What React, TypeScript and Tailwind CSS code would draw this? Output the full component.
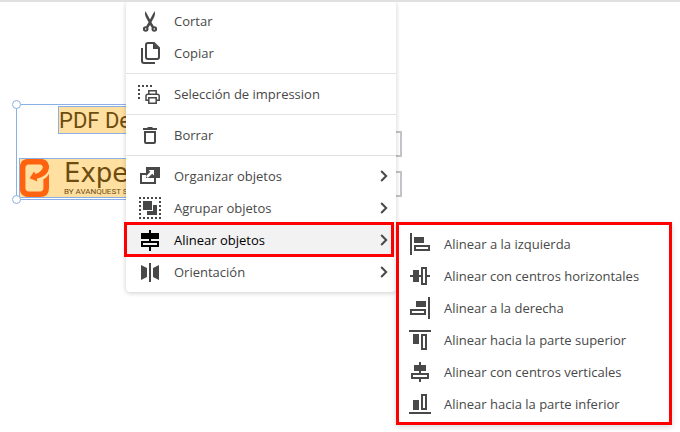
import { ReactNode } from 'react';
import clsx from 'clsx';

interface MenuEntry {
  label: string;
  icon: ReactNode;
  submenu?: MenuEntry[];
}

function Icon({ children, crisp = true }: { children: ReactNode; crisp?: boolean }) {
  return (
    <svg
      viewBox="0 0 24 24"
      className="size-6 shrink-0"
      fill="currentColor"
      shapeRendering={crisp ? 'crispEdges' : 'auto'}
      aria-hidden="true"
    >
      {children}
    </svg>
  );
}

const outline = { fill: 'none', stroke: 'currentColor', strokeWidth: 2 };

const CutIcon = () => (
  <Icon crisp={false}>
    <path d="M7.4 2 Q6.2 5 7.8 8 L10.6 13.2 L8 17.6 L10 19 L12 16 L14 19 L16 17.6 L13.4 13.2 L16.2 8 Q17.8 5 16.6 2 L12 10.4 Z" />
    <circle cx="7.7" cy="20" r="1.8" {...outline} />
    <circle cx="16.3" cy="20" r="1.8" {...outline} />
  </Icon>
);

const CopyIcon = () => (
  <Icon crisp={false}>
    <path d="M10 2 H16 L21 7 V16 Q21 18 19 18 H10 Q8 18 8 16 V4 Q8 2 10 2 Z" {...outline} />
    <path d="M15 2 V8 H21 Z" />
    <path d="M4 7 V20 Q4 22 6 22 H17" {...outline} />
  </Icon>
);

const PrintSelectionIcon = () => (
  <Icon crisp={false}>
    <path d="M0 4 H14" {...outline} strokeDasharray="2 2" />
    <path d="M1 7 V17" {...outline} strokeDasharray="2 2" />
    <g {...outline} strokeWidth={1.5}>
      <path d="M10.8 12 V8.8 H18.2 V12" />
      <path d="M11 18.2 H8 V14 Q8 12.2 10 12.2 H19.2 Q21.2 12.2 21.2 14 V18.2 H18" />
      <path d="M10.8 15.8 H18.2 V21.2 H10.8 Z" />
    </g>
  </Icon>
);

const DeleteIcon = () => (
  <Icon crisp={false}>
    <path d="M5 5 H9 L10 4 H14 L15 5 H19 V7 H5 Z" />
    <path d="M7 9 H17 V19 Q17 20 16 20 H8 Q7 20 7 19 Z" {...outline} />
  </Icon>
);

const ArrangeIcon = () => (
  <Icon crisp={false}>
    <path d="M8 3 H22 V14 H8 Z" />
    <path d="M2 9 H8 V11 H4 V18 H16 V14 H18 V20 H2 Z" />
    <path d="M4 11 H8 V14 H16 V18 H4 Z" fill="white" />
    <path d="M10.5 6 H16 V11.5 L14.2 9.7 L9.8 14 L8 12.2 L12.3 7.8 Z" fill="white" />
  </Icon>
);

const GroupIcon = () => (
  <Icon>
    <path d="M1 2 H23 M1 22 H23" {...outline} strokeDasharray="2 2" />
    <path d="M2 5 V20 M22 5 V20" {...outline} strokeDasharray="2 2" />
    <path d="M5 5 H14 V14 H5 Z" />
    <path d="M15 9 H19 V19 H9 V15 H15 Z" />
  </Icon>
);

const AlignIcon = () => (
  <Icon>
    <path d="M3 5 H21 V11 H3 Z M11 2 H13 V5 H11 Z M11 11 H13 V13 H11 Z M11 19 H13 V23 H11 Z" />
    <path d="M4 14 H20 V18 H4 Z" {...outline} />
  </Icon>
);

const OrientationIcon = () => (
  <Icon crisp={false}>
    <path d="M11 3 H13 V22 H11 Z M3 5 L9 8 V17 L3 20 Z M21 5 L15 8 V17 L21 20 Z" />
  </Icon>
);

const AlignLeftIcon = () => (
  <Icon>
    <path d="M2 1 H4 V23 H2 Z M6 5 H16 V11 H6 Z" />
    <path d="M7 14 H21 V18 H7 Z" {...outline} />
  </Icon>
);

const AlignCenterHIcon = () => (
  <Icon>
    <path d="M2 11 H5 V13 H2 Z M5 6 H11 V18 H5 Z M11 11 H13 V13 H11 Z M19 11 H22 V13 H19 Z" />
    <path d="M14 4 H18 V20 H14 Z" {...outline} />
  </Icon>
);

const AlignRightIcon = () => (
  <Icon>
    <path d="M20 1 H22 V23 H20 Z M8 5 H18 V11 H8 Z" />
    <path d="M3 14 H17 V18 H3 Z" {...outline} />
  </Icon>
);

const AlignTopIcon = () => (
  <Icon>
    <path d="M1 2 H23 V4 H1 Z M5 6 H11 V16 H5 Z" />
    <path d="M14 7 H18 V21 H14 Z" {...outline} />
  </Icon>
);

const AlignCenterVIcon = () => (
  <Icon>
    <path d="M6 5 H18 V11 H6 Z M11 2 H13 V5 H11 Z M11 11 H13 V13 H11 Z M11 19 H13 V22 H11 Z" />
    <path d="M4 14 H20 V18 H4 Z" {...outline} />
  </Icon>
);

const AlignBottomIcon = () => (
  <Icon>
    <path d="M1 20 H23 V22 H1 Z M5 8 H11 V18 H5 Z" />
    <path d="M14 3 H18 V17 H14 Z" {...outline} />
  </Icon>
);

const alignEntries: MenuEntry[] = [
  { label: 'Alinear a la izquierda', icon: <AlignLeftIcon /> },
  { label: 'Alinear con centros horizontales', icon: <AlignCenterHIcon /> },
  { label: 'Alinear a la derecha', icon: <AlignRightIcon /> },
  { label: 'Alinear hacia la parte superior', icon: <AlignTopIcon /> },
  { label: 'Alinear con centros verticales', icon: <AlignCenterVIcon /> },
  { label: 'Alinear hacia la parte inferior', icon: <AlignBottomIcon /> },
];

const menuGroups: MenuEntry[][] = [
  [
    { label: 'Cortar', icon: <CutIcon /> },
    { label: 'Copiar', icon: <CopyIcon /> },
  ],
  [{ label: 'Selección de impression', icon: <PrintSelectionIcon /> }],
  [{ label: 'Borrar', icon: <DeleteIcon /> }],
  [
    { label: 'Organizar objetos', icon: <ArrangeIcon />, submenu: [] },
    { label: 'Agrupar objetos', icon: <GroupIcon />, submenu: [] },
    { label: 'Alinear objetos', icon: <AlignIcon />, submenu: alignEntries },
    { label: 'Orientación', icon: <OrientationIcon />, submenu: [] },
  ],
];

function MenuItem({ entry, open = false }: { entry: MenuEntry; open?: boolean }) {
  return (
    <button
      type="button"
      role="menuitem"
      className={clsx(
        'flex h-8 w-full items-center gap-3 pl-3 pr-2 text-left whitespace-nowrap hover:bg-[#f2f2f2]',
        open ? 'bg-[#f2f2f2] text-black' : 'text-[#484848]'
      )}
    >
      {entry.icon}
      <span className="flex-1 pt-0.5">{entry.label}</span>
      {entry.submenu && (
        <svg viewBox="0 0 8 12" className="h-3 w-2 shrink-0 text-[#484848]" aria-hidden="true">
          <path d="M1.2 1 L6.2 6 L1.2 11" fill="none" stroke="currentColor" strokeWidth="2" />
        </svg>
      )}
    </button>
  );
}

function Submenu({ entries }: { entries: MenuEntry[] }) {
  return (
    <div
      role="menu"
      className="absolute left-full -top-0.5 w-[276px] bg-white pt-1.5 pb-[5px] outline-3 -outline-offset-3 outline-[#ff0000] shadow-[0_2px_6px_rgba(0,0,0,0.15)]"
    >
      {entries.map((entry) => (
        <MenuItem key={entry.label} entry={entry} />
      ))}
    </div>
  );
}

function ContextMenu() {
  return (
    <div
      role="menu"
      className="absolute left-[126px] top-px w-[270px] rounded bg-white py-1 shadow-[0_1px_5px_rgba(0,0,0,0.2)]"
    >
      {menuGroups.map((group, index) => (
        <div key={index}>
          {index > 0 && <hr className="my-1 border-[#e2e2e2]" />}
          {group.map((entry) => {
            const open = Boolean(entry.submenu?.length);
            return (
              <div key={entry.label} className="relative">
                <MenuItem entry={entry} open={open} />
                {open && (
                  <>
                    <div className="pointer-events-none absolute -left-0.5 -top-0.5 right-0.5 -bottom-px border-3 border-[#ff0000]" />
                    <Submenu entries={entry.submenu!} />
                  </>
                )}
              </div>
            );
          })}
        </div>
      ))}
    </div>
  );
}

function ExpertLogo() {
  return (
    <svg viewBox="0 0 30 38" className="h-[38px] w-[30px] shrink-0" fill="#ff630f" aria-hidden="true">
      <path
        d="M26.2 9 Q26.2 2.6 20 2.6 H9 Q2.6 2.6 2.6 9 V29 Q2.6 35.2 9 35.2 H20 Q26.2 35.2 26.2 29 V20"
        fill="none"
        stroke="#ff630f"
        strokeWidth="5.6"
      />
      <path d="M29 15 Q27 18.6 23.4 20.6 H29 Z" />
      <path d="M21 5 L23 8 Q22 12.6 15.6 15 L14 12.4 L9.6 19.2 L17.4 22.4 L16.8 19.8 Q28 17 29 9 V6 Z" />
    </svg>
  );
}

function SelectedObjects() {
  return (
    <div className="absolute left-4 top-[104px] h-24 w-[300px] border border-[#8bb0e6] text-[#6d4c12]">
      <div className="absolute left-[41px] top-px h-7 w-[200px] border border-[#8bb0e6] bg-[#ffe0a0] font-['Roboto',sans-serif] text-[22px] leading-[28px] whitespace-nowrap">
        PDF De
      </div>
      <div className="absolute left-0.5 top-[53px] flex h-10 w-[290px] gap-3.5 border border-[#8bb0e6] bg-[#ffe0a0]">
        <ExpertLogo />
        <div className="flex flex-col whitespace-nowrap">
          <span className="font-['DejaVu_Sans',sans-serif] text-[26px] leading-[28px]">Expe</span>
          <span className="font-['Roboto',sans-serif] text-[8px] leading-[10px]">BY AVANQUEST S</span>
        </div>
      </div>
      <span className="absolute -left-[5px] -top-[5px] size-[9px] rounded-full border border-[#8bb0e6] bg-white" />
      <span className="absolute -left-[5px] -bottom-[5px] size-[9px] rounded-full border border-[#8bb0e6] bg-white" />
    </div>
  );
}

export default function App() {
  return (
    <main className="relative min-h-screen overflow-hidden border-t-2 border-[#e0e0e0] bg-white font-['Open_Sans','Noto_Sans',sans-serif] text-[13px]">
      <div className="absolute inset-x-0 -top-0.5 bottom-0">
        <SelectedObjects />
        <div className="absolute left-[300px] top-[131px] flex flex-col gap-3.5">
          <input aria-label="Campo 1" className="h-[26px] w-[102px] border-2 border-[#c3c3c9] bg-white" />
          <input aria-label="Campo 2" className="h-[26px] w-[102px] border-2 border-[#c3c3c9] bg-white" />
        </div>
        <ContextMenu />
      </div>
    </main>
  );
}
